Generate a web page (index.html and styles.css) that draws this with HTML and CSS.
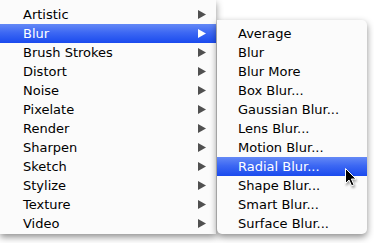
FILE: index.html
```html
<!DOCTYPE html>
<html>
<head>
<meta charset="utf-8">
<link rel="stylesheet" href="styles.css">
</head>
<body>
<div class="stage">
  <ul class="menu main">
    <li class="item">Artistic<svg class="arrow" viewBox="0 0 8 9"><path d="M0 0 L8 4.5 L0 9 Z"/></svg></li>
    <li class="item active">Blur<svg class="arrow" viewBox="0 0 8 9"><path d="M0 0 L8 4.5 L0 9 Z"/></svg></li>
    <li class="item">Brush Strokes<svg class="arrow" viewBox="0 0 8 9"><path d="M0 0 L8 4.5 L0 9 Z"/></svg></li>
    <li class="item">Distort<svg class="arrow" viewBox="0 0 8 9"><path d="M0 0 L8 4.5 L0 9 Z"/></svg></li>
    <li class="item">Noise<svg class="arrow" viewBox="0 0 8 9"><path d="M0 0 L8 4.5 L0 9 Z"/></svg></li>
    <li class="item">Pixelate<svg class="arrow" viewBox="0 0 8 9"><path d="M0 0 L8 4.5 L0 9 Z"/></svg></li>
    <li class="item">Render<svg class="arrow" viewBox="0 0 8 9"><path d="M0 0 L8 4.5 L0 9 Z"/></svg></li>
    <li class="item">Sharpen<svg class="arrow" viewBox="0 0 8 9"><path d="M0 0 L8 4.5 L0 9 Z"/></svg></li>
    <li class="item">Sketch<svg class="arrow" viewBox="0 0 8 9"><path d="M0 0 L8 4.5 L0 9 Z"/></svg></li>
    <li class="item">Stylize<svg class="arrow" viewBox="0 0 8 9"><path d="M0 0 L8 4.5 L0 9 Z"/></svg></li>
    <li class="item">Texture<svg class="arrow" viewBox="0 0 8 9"><path d="M0 0 L8 4.5 L0 9 Z"/></svg></li>
    <li class="item">Video<svg class="arrow" viewBox="0 0 8 9"><path d="M0 0 L8 4.5 L0 9 Z"/></svg></li>
  </ul>
  <ul class="menu sub">
    <li class="item">Average</li>
    <li class="item">Blur</li>
    <li class="item">Blur More</li>
    <li class="item">Box Blur...</li>
    <li class="item">Gaussian Blur...</li>
    <li class="item">Lens Blur...</li>
    <li class="item">Motion Blur...</li>
    <li class="item active">Radial Blur...</li>
    <li class="item">Shape Blur...</li>
    <li class="item">Smart Blur...</li>
    <li class="item">Surface Blur...</li>
  </ul>
  <svg class="cursor" viewBox="0 0 13 20" width="13" height="20">
    <path d="M1.5 1.5 L1.5 16.5 L5 13 L7.6 18.8 L10 17.8 L7.4 12 L12 12 Z" fill="#000" stroke="#fff" stroke-width="1" stroke-linejoin="round"/>
  </svg>
</div>
</body>
</html>
```
FILE: styles.css
```css
html, body {
  margin: 0;
  padding: 0;
  background: #ffffff;
}

.stage {
  position: relative;
  width: 374px;
  height: 243px;
  overflow: hidden;
  display: flex;
  align-items: flex-start;
  font-family: "DejaVu Sans", Verdana, sans-serif;
  font-size: 13px;
  color: #000;
}

.menu {
  list-style: none;
  margin: 0;
  background: #fbfbfb;
  box-shadow: 0 3px 7px rgba(0, 0, 0, 0.45);
}

.main {
  width: 216px;
  padding: 5px 0 1px 0;
  position: relative;
  z-index: 1;
}

.sub {
  width: 150px;
  margin-left: 1px;
  margin-top: 20px;
  padding: 4px 0 1px 0;
  border-radius: 0 5px 5px 5px;
  position: relative;
  z-index: 2;
}

.item {
  height: 19px;
  line-height: 19px;
  display: flex;
  align-items: center;
  justify-content: space-between;
  white-space: nowrap;
}

.main .item {
  padding: 0 10px 0 23px;
}

.sub .item {
  padding: 0 8px 0 21px;
}

.item.active {
  background: linear-gradient(to bottom, #6489f6 0%, #3d68f3 45%, #1a4aee 100%);
  color: #fff;
}

.arrow {
  width: 8px;
  height: 9px;
  fill: #505050;
}

.active .arrow {
  fill: #fff;
}

.cursor {
  position: absolute;
  left: 344px;
  top: 167px;
  z-index: 3;
  filter: drop-shadow(1px 2px 1px rgba(0, 0, 0, 0.35));
}
```
